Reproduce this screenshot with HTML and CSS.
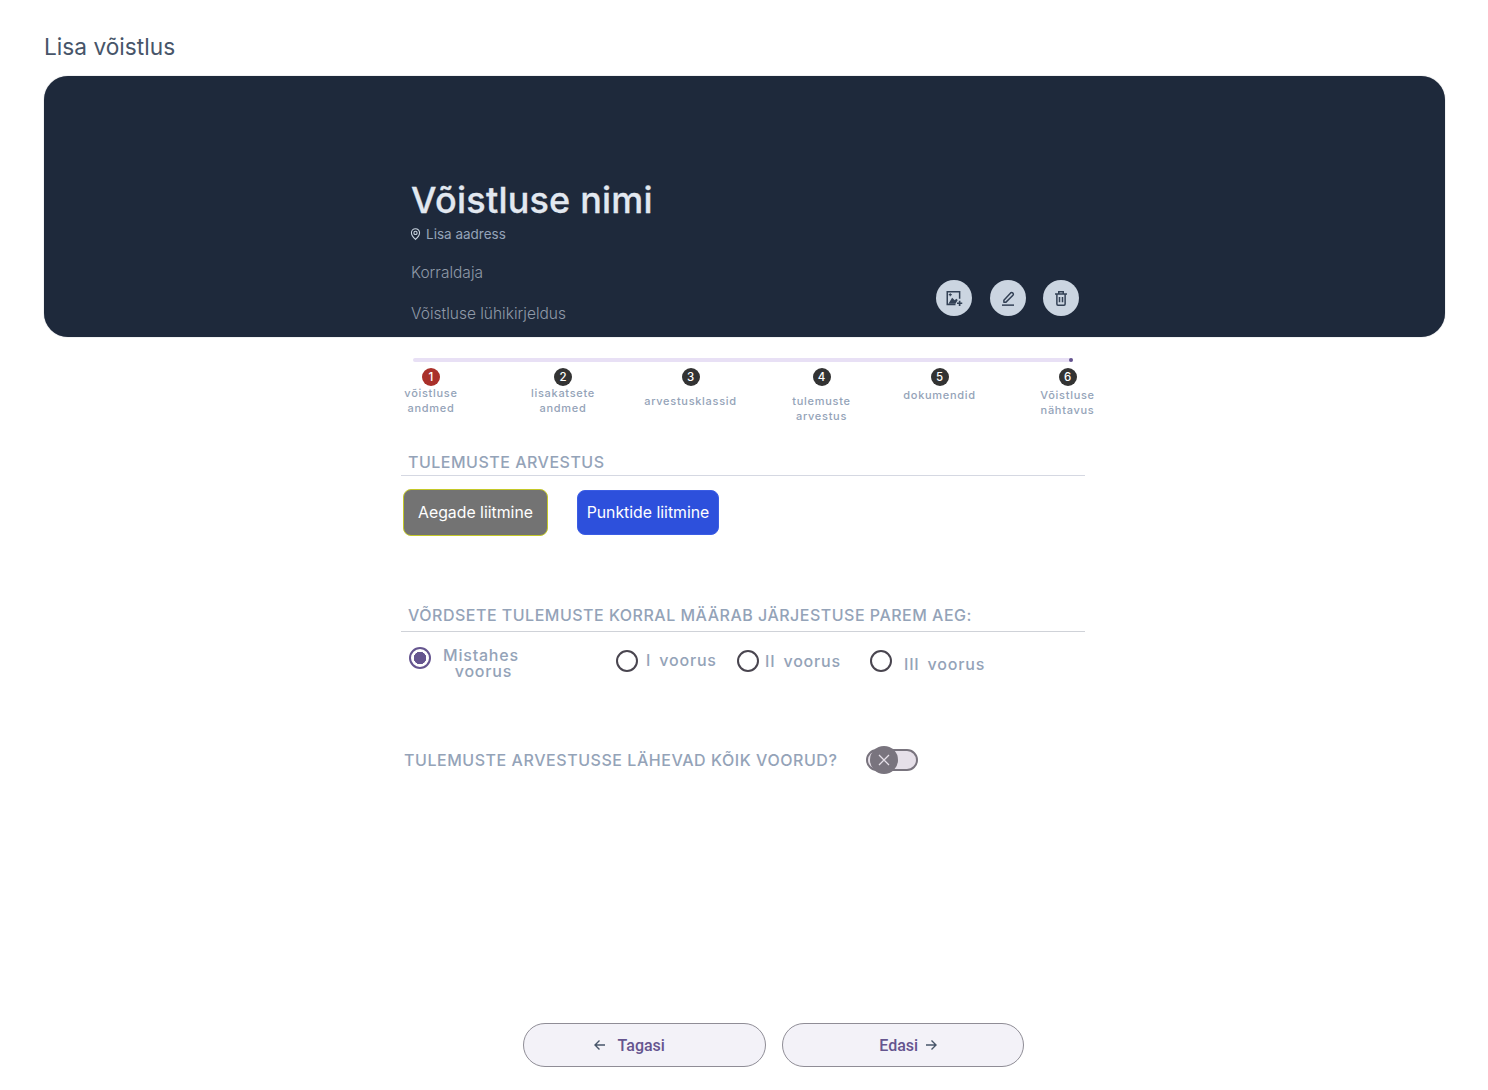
FILE: index.html
```html
<!DOCTYPE html>
<html lang="et">
<head>
<meta charset="utf-8">
<title>Lisa võistlus</title>
<link rel="stylesheet" href="styles.css">
</head>
<body>
<main class="page">
  <h1 class="page-title">Lisa võistlus</h1>
  <section class="hero">
    <div class="hero-text">
      <h2 class="hero-name">Võistluse nimi</h2>
      <div class="hero-address">
        <svg class="pin" viewBox="0 0 24 24" width="13" height="14" fill="none" stroke="#cbd5e1" stroke-width="2"><path d="M12 22s7.500-6.600 7.500-12.200A7.500 7.500 0 0 0 4.500 9.800C4.500 15.400 12 22 12 22z"/><circle cx="12" cy="10" r="3"/></svg>
        <span>Lisa aadress</span>
      </div>
      <div class="hero-org">Korraldaja</div>
      <div class="hero-desc">Võistluse lühikirjeldus</div>
    </div>
    <div class="hero-actions">
      <button class="round-btn" aria-label="Lisa pilt"><svg viewBox="0 0 24 24" width="18" height="18" fill="none"><path d="M19.500 13V3.500H3V20.500H14" stroke="#334155" stroke-width="2"/><path d="M4.500 19.500 9.500 11.500 13 15 15 13 17 14.500 14 19.500z" fill="#334155"/><path d="M7 5.500v4M5 7.500h4" stroke="#334155" stroke-width="1.400"/><path d="M19.500 15.500v7M16 19h7" stroke="#334155" stroke-width="2.200"/></svg></button>
      <button class="round-btn" aria-label="Muuda"><svg viewBox="0 0 24 24" width="18" height="18" fill="none" stroke="#334155" stroke-width="2" stroke-linejoin="round"><path d="M6.500 15 15.500 5.200a1.900 1.900 0 0 1 2.700 0l.4.400a1.900 1.900 0 0 1 0 2.700L9 17.800H6.500z"/><path d="M4 21.500h16"/></svg></button>
      <button class="round-btn" aria-label="Kustuta"><svg viewBox="0 0 24 24" width="18" height="18" fill="none" stroke="#334155" stroke-width="2"><path d="M4 6.500h16M9 6V3.500h6V6M6.500 6.500V20a1.500 1.500 0 0 0 1.500 1.500h8a1.500 1.500 0 0 0 1.500-1.500V6.500M10 10.500v7M14 10.500v7"/></svg></button>
    </div>
  </section>

  <div class="form">
    <div class="progress"><span class="progress-dot"></span></div>
    <ol class="steps">
      <li class="step step-1"><span class="step-num step-num-active">1</span><span class="step-label">võistluse<br>andmed</span></li>
      <li class="step step-2"><span class="step-num">2</span><span class="step-label">lisakatsete<br>andmed</span></li>
      <li class="step step-3"><span class="step-num">3</span><span class="step-label">arvestusklassid</span></li>
      <li class="step step-4"><span class="step-num">4</span><span class="step-label">tulemuste<br>arvestus</span></li>
      <li class="step step-5"><span class="step-num">5</span><span class="step-label">dokumendid</span></li>
      <li class="step step-6"><span class="step-num">6</span><span class="step-label">Võistluse<br>nähtavus</span></li>
    </ol>

    <h3 class="section-head section-results">TULEMUSTE ARVESTUS</h3>
    <div class="choice-row">
      <button class="choice choice-time">Aegade liitmine</button>
      <button class="choice choice-points">Punktide liitmine</button>
    </div>

    <h3 class="section-head section-ties">VÕRDSETE TULEMUSTE KORRAL MÄÄRAB JÄRJESTUSE PAREM AEG:</h3>
    <div class="radio-row">
      <div class="radio-item radio-a"><span class="radio radio-on"></span><span class="radio-label">Mistahes<br><span class="radio-line2">voorus</span></span></div>
      <div class="radio-item radio-b"><span class="radio"></span><span class="radio-label">I&nbsp; voorus</span></div>
      <div class="radio-item radio-c"><span class="radio"></span><span class="radio-label">II&nbsp; voorus</span></div>
      <div class="radio-item radio-d"><span class="radio"></span><span class="radio-label">III&nbsp; voorus</span></div>
    </div>

    <div class="toggle-row">
      <span class="toggle-label">TULEMUSTE ARVESTUSSE LÄHEVAD KÕIK VOORUD?</span>
      <span class="switch"><span class="switch-thumb"><svg viewBox="0 0 12 12" width="12" height="12" fill="none" stroke="#e6e0e9" stroke-width="1.300"><path d="M1 1l10 10M11 1 1 11"/></svg></span></span>
    </div>
  </div>

  <div class="nav">
    <button class="nav-btn nav-btn-back"><svg viewBox="0 0 14 14" width="14" height="14" fill="none" stroke="#475569" stroke-width="1.400"><path d="M12 7H2M6.500 2.500 2 7l4.500 4.500"/></svg><span>Tagasi</span></button>
    <button class="nav-btn nav-btn-next"><span>Edasi</span><svg viewBox="0 0 14 14" width="14" height="14" fill="none" stroke="#475569" stroke-width="1.400"><path d="M2 7h10M7.500 2.500 12 7l-4.500 4.500"/></svg></button>
  </div>
</main>
</body>
</html>
```
FILE: styles.css
```css
* { box-sizing: border-box; }
html, body { margin: 0; padding: 0; background: #fff; }
body { font-family: Inter, "Noto Sans", sans-serif; }

.page { width: 1488px; height: 1090px; padding: 33px 43px 0 44px; display: flex; flex-direction: column; }

.page-title { margin: 0; font-size: 22.700px; line-height: 28px; font-weight: 400; color: #475569; }

.hero { margin-top: 15px; height: 261px; background: #1e293b; border-radius: 24px; padding: 102px 366px 0 367px; display: flex; justify-content: space-between; align-items: flex-end; box-shadow: 0 0 1px rgba(30, 41, 59, .6); }
.hero-text { align-self: flex-start; }
.hero-name { margin: 0; font-size: 36px; line-height: 44px; font-weight: 500; letter-spacing: .2px; color: #e2e8f0; -webkit-text-stroke: .3px #e2e8f0; }
.hero-address { display: flex; align-items: center; gap: 4px; margin-top: 2px; font-size: 13.500px; line-height: 20px; color: #94a3b8; margin-left: -2px; }
.hero-org { margin-top: 19px; font-size: 15.500px; line-height: 20px; font-weight: 300; color: #8f99a8; }
.hero-desc { margin-top: 21px; font-size: 15.500px; line-height: 20px; font-weight: 300; color: #8f99a8; }
.hero-actions { display: flex; gap: 17.500px; margin-bottom: 21px; }
.round-btn { width: 36px; height: 36px; border: 0; border-radius: 50%; padding: 0; background: #cbd5e1; display: flex; align-items: center; justify-content: center; }

.form { width: 684px; margin: 1px 0 0 357px; flex: 1; }

.progress { margin: 20px 12px 0 12px; height: 4px; border-radius: 2px; background: #e8e0f5; position: relative; }
.progress-dot { position: absolute; right: 0; top: 0; width: 4px; height: 4px; border-radius: 50%; background: #65558f; }

.steps { list-style: none; margin: 6px 0 0; padding: 0; display: flex; height: 66px; }
.step { display: flex; flex-direction: column; align-items: center; flex: none; }
.step-num { width: 18px; height: 18px; border-radius: 50%; background: #333; color: #fff; font-size: 11.500px; font-weight: 500; line-height: 18px; text-align: center; }
.step-num-active { background: #a9302a; }
.step-label { font-size: 11px; line-height: 15.200px; font-weight: 500; letter-spacing: .7px; color: #94a3b8; text-align: center; white-space: nowrap; }
.step-1 { width: 60px; margin-left: 0; }
.step-2 { width: 70px; margin-left: 67px; }
.step-3 { width: 96px; margin-left: 44.500px; }
.step-4 { width: 60px; margin-left: 53px; }
.step-5 { width: 76px; margin-left: 50px; }
.step-6 { width: 60px; margin-left: 60px; }
.step-3 .step-label, .step-4 .step-label { margin-top: 8px; }
.step-5 .step-label, .step-6 .step-label { margin-top: 2px; }

.section-head { margin: 0; font-size: 16px; line-height: 20px; font-weight: 500; letter-spacing: .5px; color: #94a3b8; padding: 0 0 3px 7px; border-bottom: 1px solid #d5d8e2; }
.section-results { margin-top: 18px; }
.section-ties { margin-top: 69px; padding-bottom: 6px; border-bottom-color: #cfd2d8; }

.choice-row { display: flex; align-items: center; margin-top: 13px; }
.choice { font-family: inherit; font-size: 15.800px; font-weight: 400; color: #fff; border-radius: 8px; padding: 0 0 1px; }
.choice-time { width: 145px; height: 47px; margin-left: 2px; background: #737373; border: 1px solid #c4c828; }
.choice-points { width: 142px; height: 45px; margin-left: 29px; background: #2d50dc; border: 1px solid #3b5de4; }

.radio-row { display: flex; height: 74px; margin-top: 15px; }
.radio-item { display: flex; flex: none; font-size: 16px; line-height: 16px; font-weight: 500; letter-spacing: .8px; word-spacing: -1px; color: #94a3b8; }
.radio { width: 22px; height: 22px; border-radius: 50%; border: 2px solid #49454f; background: #fff; flex: none; }
.radio-on { border-color: #65558f; background: radial-gradient(circle, #65558f 0 6px, #fff 6.500px); }
.radio-label { text-align: center; white-space: nowrap; }
.radio-line2 { padding-left: 5px; }
.radio-a { margin-left: 8px; gap: 12px; width: 207px; }
.radio-b { gap: 8px; width: 121px; margin-top: 3px; }
.radio-b .radio-label { margin-top: 2px; }
.radio-c { gap: 6px; width: 133px; margin-top: 3px; }
.radio-c .radio-label { margin-top: 3px; }
.radio-d { gap: 12px; margin-top: 3px; }
.radio-d .radio-label { margin-top: 6px; }

.toggle-row { display: flex; align-items: center; margin-top: 28px; padding-left: 3px; }
.toggle-label { font-size: 16px; line-height: 20px; font-weight: 500; letter-spacing: .55px; color: #94a3b8; white-space: nowrap; }
.switch { position: relative; width: 52px; height: 22px; margin-left: 29px; border: 2px solid #79747e; border-radius: 11px; background: #e6e0e9; flex: none; }
.switch-thumb { position: absolute; left: 2px; top: -5px; width: 28px; height: 28px; border-radius: 50%; background: #79747e; display: flex; align-items: center; justify-content: center; }

.nav { display: flex; justify-content: center; gap: 16px; padding: 0 0 23px 58px; }
.nav-btn { width: 242.500px; height: 44px; border: 1.500px solid #8f8d96; border-radius: 22px; background: #f3f2f8; display: flex; align-items: center; justify-content: center; padding: 0; font-family: Roboto, sans-serif; font-size: 16px; font-weight: 500; color: #65558f; }
.nav-btn-back { gap: 11px; padding-right: 31px; }
.nav-btn-next { gap: 6px; padding-left: 12px; }
```
